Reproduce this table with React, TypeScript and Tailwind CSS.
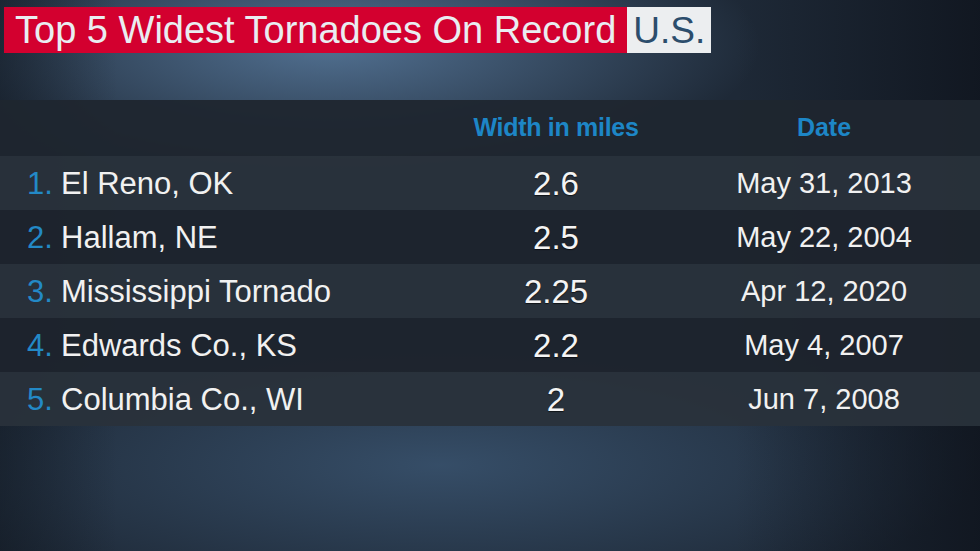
const rows = [
  { n: '1.', name: 'El Reno, OK', width: '2.6', date: 'May 31, 2013' },
  { n: '2.', name: 'Hallam, NE', width: '2.5', date: 'May 22, 2004' },
  { n: '3.', name: 'Mississippi Tornado', width: '2.25', date: 'Apr 12, 2020' },
  { n: '4.', name: 'Edwards Co., KS', width: '2.2', date: 'May 4, 2007' },
  { n: '5.', name: 'Columbia Co., WI', width: '2', date: 'Jun 7, 2008' },
];

export default function App() {
  return (
    <div className="relative w-[980px] h-[551px] overflow-hidden bg-[#1e2937] font-['Liberation_Sans',Arial,sans-serif]">
      {/* backdrop glow */}
      <div className="absolute inset-0 bg-[radial-gradient(ellipse_430px_140px_at_330px_45px,rgba(84,116,150,0.95),transparent)]" />
      <div className="absolute inset-0 bg-[radial-gradient(ellipse_540px_150px_at_440px_465px,rgba(58,84,112,0.85),transparent)]" />
      <div className="absolute inset-0 bg-[linear-gradient(90deg,rgba(14,20,28,0.45)_0%,transparent_12%,transparent_75%,rgba(12,16,24,0.7)_100%)]" />

      <div className="relative flex flex-col">
        <div className="flex pt-[7px] pl-[4px]">
          <div className="h-[46px] flex items-center bg-[#d3002f] px-[11px] text-[38px] text-[#e9edf1] leading-none">
            Top 5 Widest Tornadoes On Record
          </div>
          <div className="h-[46px] flex items-center bg-[#eceef0] px-[6px] text-[37px] text-[#2c4d6c] leading-none">
            U.S.
          </div>
        </div>

        <div className="mt-[47px] flex flex-col">
          <div className="h-[56px] grid grid-cols-[440px_232px_1fr] items-center bg-[#1f262f]/95">
            <div />
            <div className="text-center text-[25px] font-bold text-[#1d86c6] tracking-[-0.3px]">Width in miles</div>
            <div className="text-center text-[25px] font-bold text-[#1d86c6] pr-[4px]">Date</div>
          </div>
          {rows.map((r, i) => (
            <div
              key={r.n}
              className={`h-[54px] grid grid-cols-[440px_232px_1fr] items-center ${
                i % 2 === 0 ? 'bg-[#29313b]/95' : 'bg-[#1e242d]/95'
              }`}
            >
              <div className="flex items-center pl-[27px] text-[31px] leading-none">
                <span className="w-[34px] text-[#2389c6]">{r.n}</span>
                <span className="text-[#f1f1f1]">{r.name}</span>
              </div>
              <div className="text-center text-[33px] text-[#f4f4f4] leading-none [text-shadow:0_1px_1px_rgba(0,0,0,0.6)]">
                {r.width}
              </div>
              <div className="text-center text-[29px] text-[#f1f1f1] leading-none pr-[4px]">{r.date}</div>
            </div>
          ))}
        </div>
      </div>
    </div>
  );
}
